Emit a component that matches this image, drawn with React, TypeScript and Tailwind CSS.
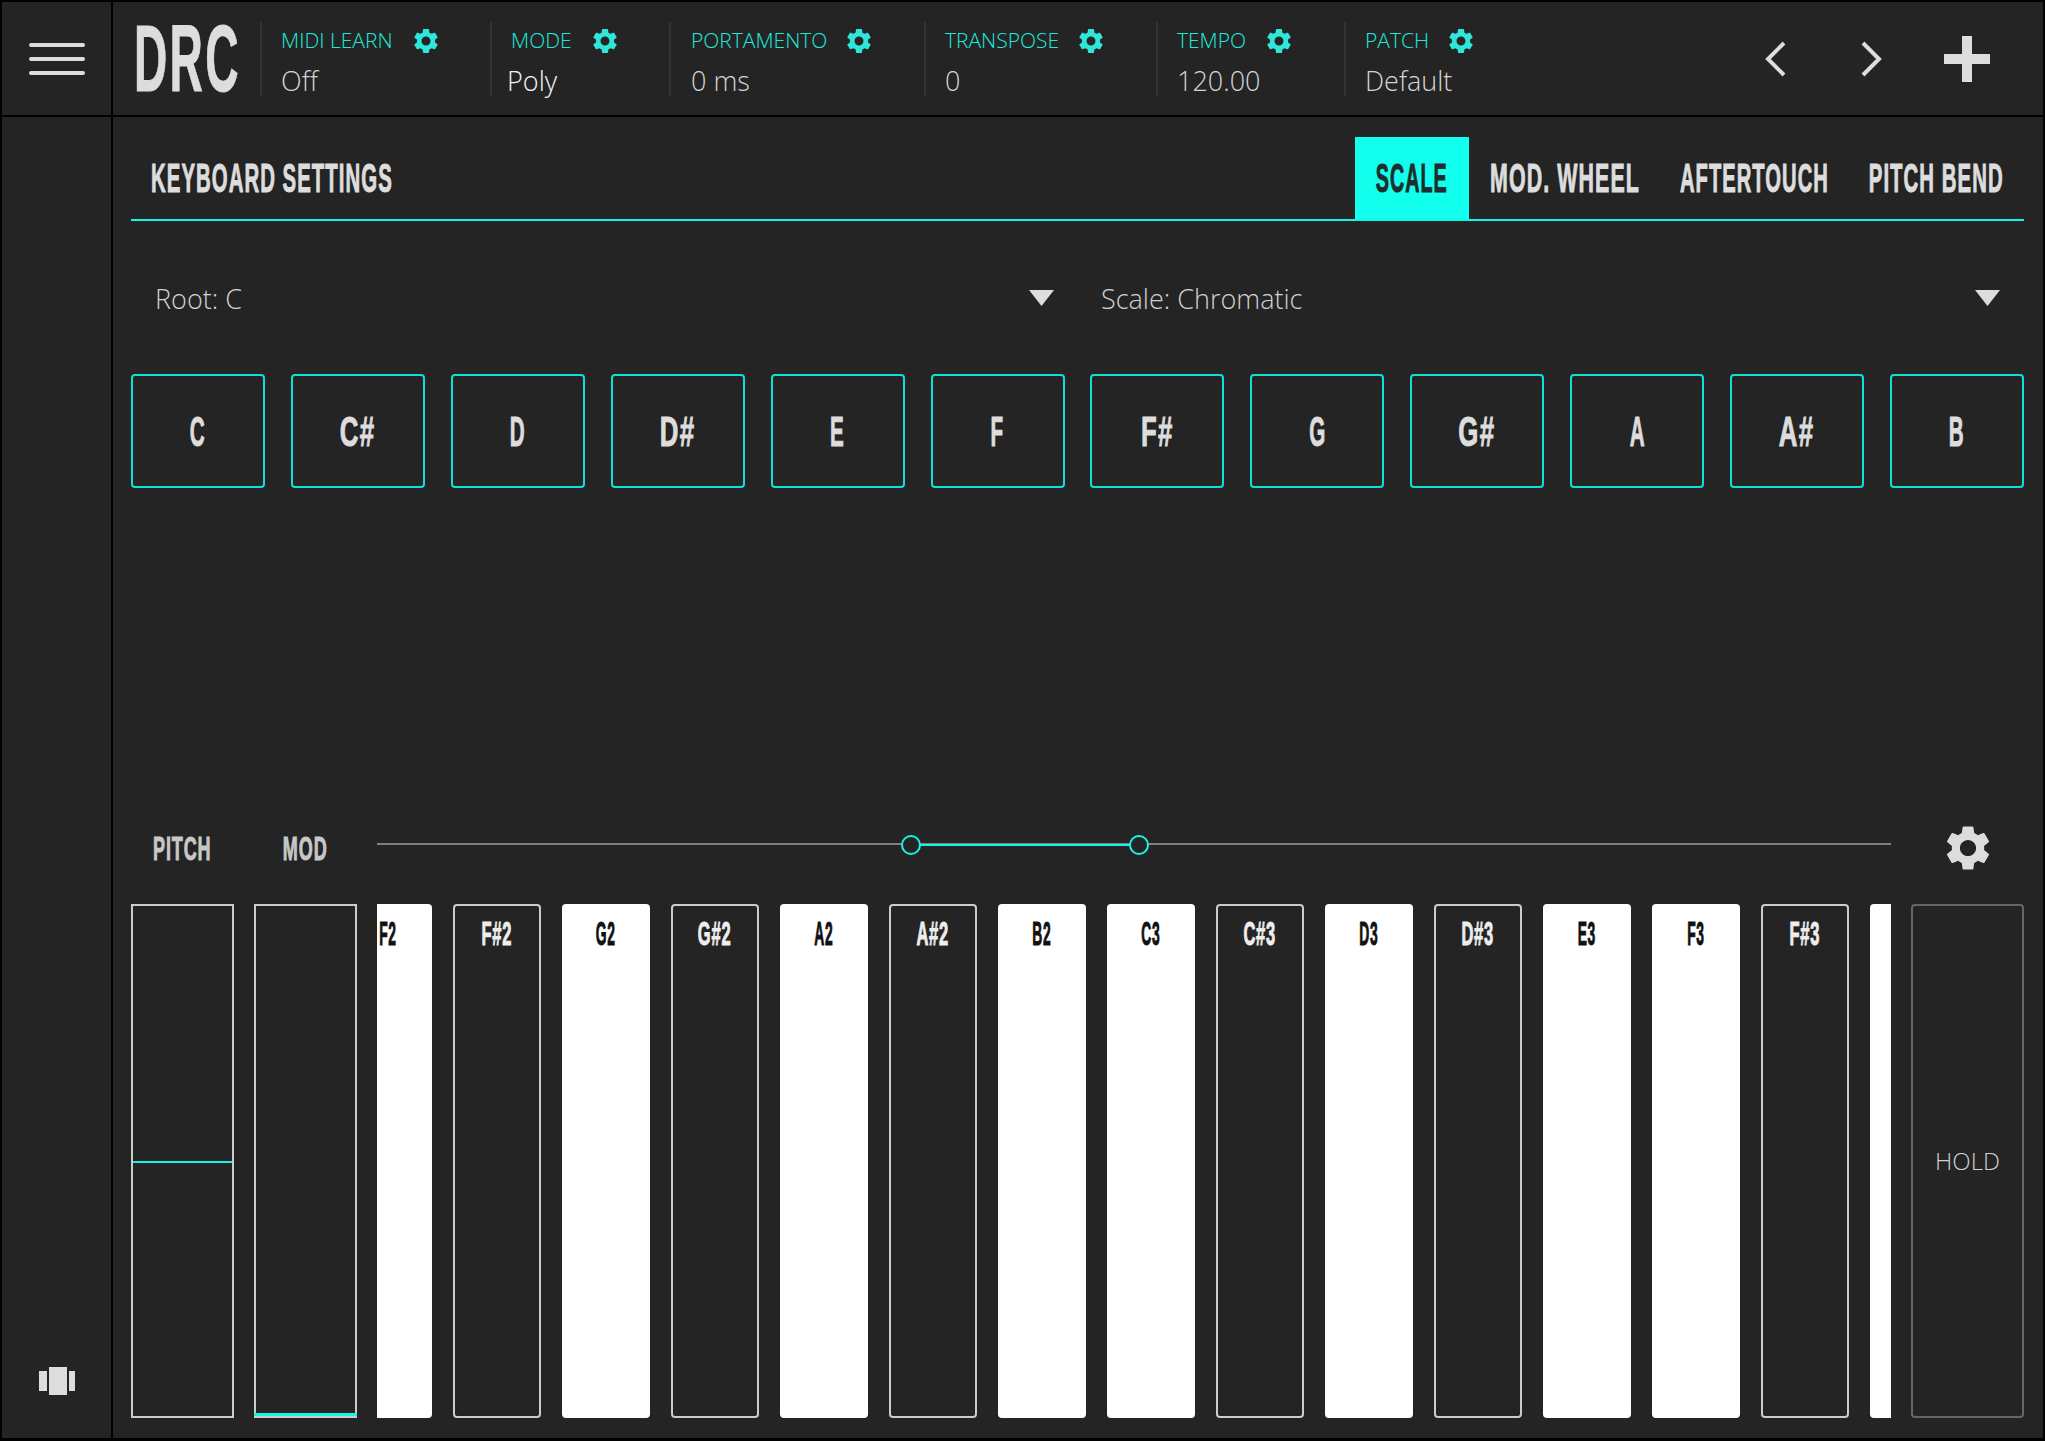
import React from "react";
import { MdSettings } from "react-icons/md";

const bebas = "font-['Liberation_Sans',sans-serif] font-bold tracking-[0.05em] [-webkit-text-stroke:1px_currentColor]";

function B({ children, className = "" }: { children: React.ReactNode; className?: string }) {
  return <span className={`${bebas} inline-block whitespace-nowrap leading-none ${className}`}>{children}</span>;
}

const fields = [
  { label: "MIDI LEARN", value: "Off", w: "w-[230px]", lw: "w-[130px]", pl: "pl-[19px]", vl: "pl-[19px]", val: "text-[#d4d4d4]" },
  { label: "MODE", value: "Poly", w: "w-[179px]", lw: "w-[79px]", pl: "pl-[19px]", vl: "pl-[15px]", val: "text-[#f4f4f4]" },
  { label: "PORTAMENTO", value: "0 ms", w: "w-[255px]", lw: "w-[153px]", pl: "pl-[20px]", vl: "pl-[20px]", val: "text-[#d4d4d4]" },
  { label: "TRANSPOSE", value: "0", w: "w-[232px]", lw: "w-[131px]", pl: "pl-[19px]", vl: "pl-[19px]", val: "text-[#d4d4d4]" },
  { label: "TEMPO", value: "120.00", w: "w-[188px]", lw: "w-[87px]", pl: "pl-[19px]", vl: "pl-[19px]", val: "text-[#d4d4d4]" },
  { label: "PATCH", value: "Default", w: "w-[200px]", lw: "w-[81px]", pl: "pl-[19px]", vl: "pl-[19px]", val: "text-[#d4d4d4]" },
];

const notes = ["C", "C#", "D", "D#", "E", "F", "F#", "G", "G#", "A", "A#", "B"];
const keys = ["F2", "F#2", "G2", "G#2", "A2", "A#2", "B2", "C3", "C#3", "D3", "D#3", "E3", "F3", "F#3", "G3"];

function Select({ label, className }: { label: string; className: string }) {
  return (
    <div className={`flex items-center justify-between ${className}`}>
      <span className="font-['Open_Sans',sans-serif] font-light text-[27px] text-[#d0d0d0] leading-none pt-[2px]">{label}</span>
      <svg width="25" height="16" viewBox="0 0 25 16"><path d="M0 0h25L12.5 16z" fill="#dddddd" /></svg>
    </div>
  );
}

export default function App() {
  return (
    <div className="w-[2045px] h-[1441px] bg-black pt-[2px] pl-[2px] pr-[2px] pb-[3px] flex flex-col gap-[2px] overflow-hidden">
      <div className="h-[113px] flex gap-[2px]">
        <div className="w-[109px] bg-[#242424] flex flex-col items-center justify-center gap-[10px]">
          <div className="w-[56px] h-[4px] rounded-full bg-[#dddddd]" />
          <div className="w-[56px] h-[4px] rounded-full bg-[#dddddd]" />
          <div className="w-[56px] h-[4px] rounded-full bg-[#dddddd]" />
        </div>
        <div className="flex-1 bg-[#242424] flex items-center">
          <div className="w-[147px] pl-[21px]">
            <B className="text-[94px] text-[#dddddd] origin-left scale-x-[0.49]">DRC</B>
          </div>
          {fields.map((f) => (
            <div key={f.label} className={`${f.w} h-[74px] border-l-2 border-[#333333] flex flex-col justify-between`}>
              <div className={`flex items-center ${f.pl} h-[32px] mt-[3px]`}>
                <span className={`${f.lw} font-['Open_Sans',sans-serif] font-light text-[21px] text-[#1fe9dc] leading-none`}>{f.label}</span>
                <MdSettings className="text-[#2fe6da] w-[30px] h-[30px]" />
              </div>
              <div className={`${f.vl} font-['Open_Sans',sans-serif] font-light text-[27px] leading-none pb-[2px] ${f.val}`}>{f.value}</div>
            </div>
          ))}
          <div className="flex-1 flex items-center justify-end pr-[52px]">
            <svg width="24" height="38" viewBox="0 0 24 38" className="mr-[71px]"><path d="M20 3L4 19l16 16" fill="none" stroke="#dddddd" strokeWidth="4" /></svg>
            <svg width="24" height="38" viewBox="0 0 24 38" className="mr-[60px]"><path d="M4 3l16 16L4 35" fill="none" stroke="#dddddd" strokeWidth="4" /></svg>
            <svg width="48" height="48" viewBox="0 0 48 48"><path d="M19 1h10v18h18v10H29v18H19V29H1V19h18z" fill="#dddddd" /></svg>
          </div>
        </div>
      </div>
      <div className="flex-1 flex gap-[2px] min-h-0">
        <div className="w-[109px] bg-[#242424] flex flex-col justify-end items-center pb-[43px]">
          <svg width="36" height="28" viewBox="0 0 36 28"><path d="M0 4h8v20H0zM10 0h18v28H10zM30 4h7v20h-7z" fill="#dddddd" /></svg>
        </div>
        <div className="flex-1 bg-[#242424] pl-[18px] pr-[19px] pt-[20px] pb-[20px] flex flex-col min-w-0">
          <div className="h-[84px] border-b-2 border-[#14f5e6] flex items-stretch justify-between">
            <div className="flex items-center pl-[20px]">
              <B className="text-[40px] text-[#dddddd] origin-left scale-x-[0.51]">KEYBOARD SETTINGS</B>
            </div>
            <div className="flex">
              <div className="w-[114px] bg-[#12ffee] flex items-center justify-center"><B className="text-[40px] text-[#1f2d2d] scale-x-[0.495]">SCALE</B></div>
              <div className="w-[191px] flex items-center justify-center"><B className="text-[40px] text-[#dddddd] scale-x-[0.535]">MOD. WHEEL</B></div>
              <div className="w-[188px] flex items-center justify-center"><B className="text-[40px] text-[#dddddd] scale-x-[0.505]">AFTERTOUCH</B></div>
              <div className="w-[176px] flex items-center justify-center"><B className="text-[40px] text-[#dddddd] scale-x-[0.51]">PITCH BEND</B></div>
            </div>
          </div>
          <div className="h-[153px] flex items-center">
            <Select label="Root: C" className="w-[923px] pl-[24px]" />
            <Select label="Scale: Chromatic" className="w-[946px] pl-[47px]" />
          </div>
          <div className="flex justify-between">
            {notes.map((n) => (
              <div key={n} className="w-[134px] h-[114px] rounded-[4px] border-2 border-[#12e0d4] flex items-center justify-center">
                <B className={`text-[43px] text-[#dddddd] ${n.includes("#") ? "scale-x-[0.6]" : "scale-x-[0.48]"}`}>{n}</B>
              </div>
            ))}
          </div>
          <div className="flex-1" />
          <div className="h-[94px] flex">
            <div className="w-[103px] flex items-center justify-center pb-[18px]"><B className="text-[34px] text-[#c8c8c8] scale-x-[0.53]">PITCH</B></div>
            <div className="w-[103px] ml-[20px] flex items-center justify-center pb-[18px]"><B className="text-[34px] text-[#c8c8c8] scale-x-[0.53]">MOD</B></div>
            <div className="w-[1514px] ml-[20px] relative flex items-center pb-[26px]">
              <div className="h-[2px] w-full bg-[#808080]" />
              <div className="absolute left-[533px] top-[34px] h-[2px] w-[228px] bg-[#14f5e6]" />
              <div className="absolute left-[524px] top-[25px] w-[20px] h-[20px] rounded-full border-2 border-[#14f5e6] bg-[#242424]" />
              <div className="absolute left-[752px] top-[25px] w-[20px] h-[20px] rounded-full border-2 border-[#14f5e6] bg-[#242424]" />
            </div>
            <div className="flex-1 flex items-center justify-center pl-[20px] pb-[18px]">
              <MdSettings className="text-[#dddddd] w-[54px] h-[54px]" />
            </div>
          </div>
          <div className="h-[514px] flex">
            <div className="w-[103px] border-2 border-[#cccccc] relative">
              <div className="absolute left-0 right-0 top-[255px] h-[2px] bg-[#14f5e6]" />
            </div>
            <div className="w-[103px] ml-[20px] border-2 border-[#cccccc] relative">
              <div className="absolute -left-[2px] -right-[2px] bottom-0 h-[3px] bg-[#14f5e6]" />
            </div>
            <div className="w-[1514px] ml-[20px] overflow-hidden">
              <div className="flex gap-[21px] -ml-[33px] h-full w-[1700px]">
                {keys.map((k) => {
                  const dark = k.includes("#");
                  return (
                    <div key={k} className={`w-[88px] shrink-0 h-full rounded-[4px] flex justify-center ${dark ? "pt-[11px] border-2 border-[#cccccc] bg-[#242424] text-[#eeeeee]" : "pt-[13px] bg-white text-[#111111]"}`}>
                      <B className={`text-[33px] ${dark ? "scale-x-[0.5]" : "scale-x-[0.42]"}`}>{k}</B>
                    </div>
                  );
                })}
              </div>
            </div>
            <div className="flex-1 ml-[20px] rounded-[4px] border-2 border-[#666666] flex items-center justify-center">
              <span className="font-['Open_Sans',sans-serif] font-light text-[24px] text-[#d0d0d0]">HOLD</span>
            </div>
          </div>
        </div>
      </div>
    </div>
  );
}
